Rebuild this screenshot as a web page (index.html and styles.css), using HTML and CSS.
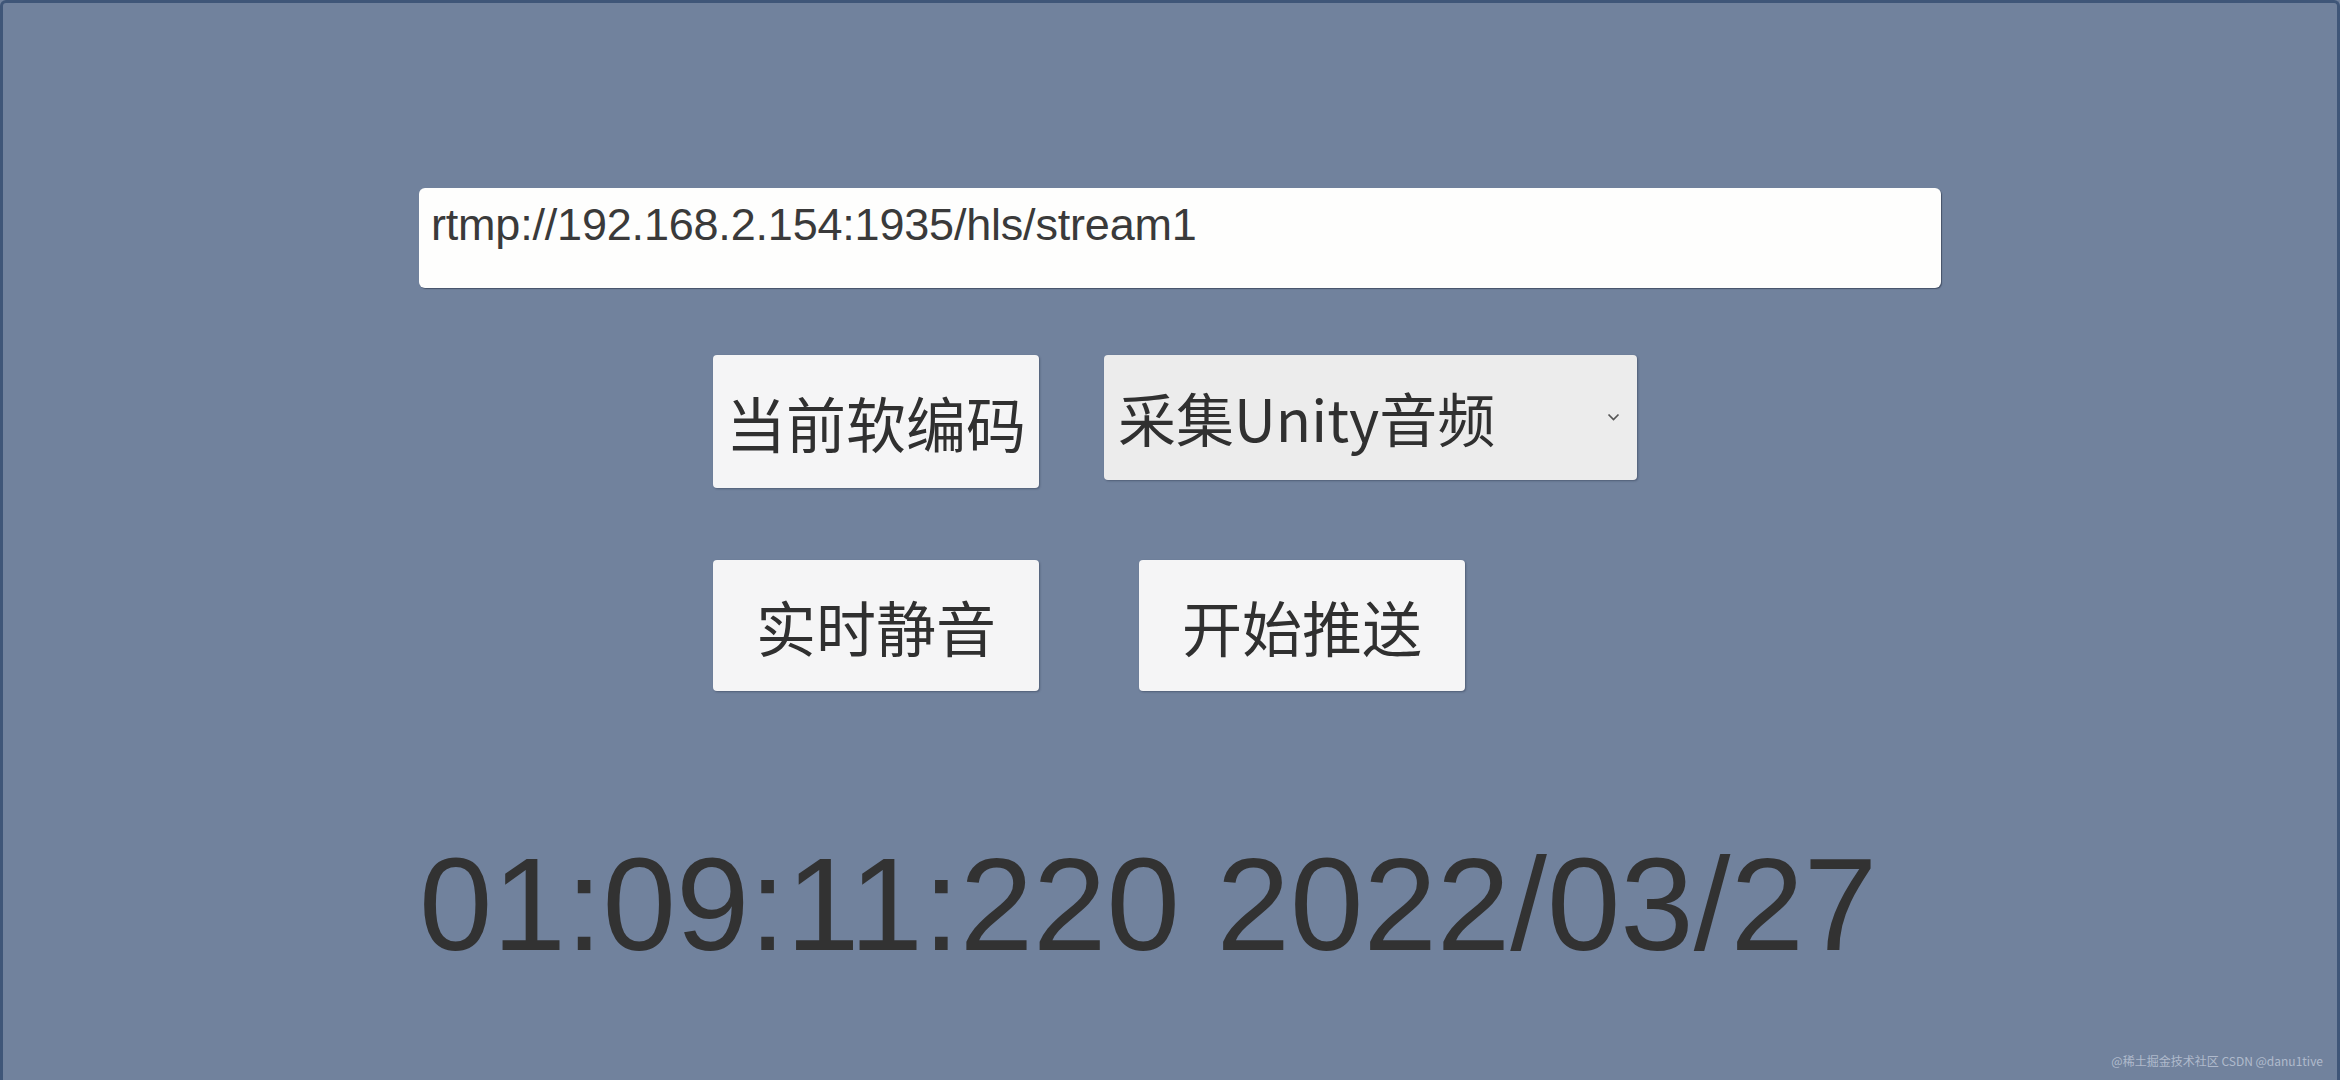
FILE: index.html
```html
<!DOCTYPE html>
<html lang="zh-CN">
<head>
<meta charset="utf-8">
<title>推流</title>
<link rel="stylesheet" href="styles.css">
</head>
<body>
<div class="screen">
  <div class="panel">
    <div class="url-field">rtmp://192.168.2.154:1935/hls/stream1</div>
    <div class="row row-one">
      <div class="btn btn-tall">当前软编码</div>
      <div class="dropdown">
        <span class="dropdown-label">采集Unity音频</span>
        <svg class="chevron" width="13" height="9" viewBox="0 0 13 9"><path d="M1.5 1.5 L6.5 6.5 L11.5 1.5" fill="none" stroke="#555" stroke-width="1.7"/></svg>
      </div>
    </div>
    <div class="row row-two">
      <div class="btn">实时静音</div>
      <div class="btn">开始推送</div>
    </div>
    <div class="clock">01:09:11:220 2022/03/27</div>
  </div>
  <div class="watermark">@稀土掘金技术社区 CSDN @danu1tive</div>
</div>
</body>
</html>
```
FILE: styles.css
```css
html, body {
  margin: 0;
  padding: 0;
  background: #71829d;
}
.screen {
  position: relative;
  width: 2340px;
  height: 1080px;
  box-sizing: border-box;
  border: 3px solid #3f5678;
  border-bottom: none;
  border-radius: 6px 6px 0 0;
  background: #71829d;
  overflow: hidden;
}
.panel {
  display: flex;
  flex-direction: column;
  align-items: flex-start;
  padding-top: 185px;
  padding-left: 416px;
}
.url-field {
  width: 1522px;
  height: 100px;
  box-sizing: border-box;
  background: #fefefd;
  border-radius: 6px;
  box-shadow: 1px 1px 1px rgba(40, 50, 70, 0.6);
  padding: 14px 12px 0;
  font-family: "Liberation Sans", Arial, sans-serif;
  font-size: 45px;
  line-height: 45px;
  color: #3a3a3a;
  letter-spacing: -0.2px;
}
.row {
  display: flex;
  align-items: flex-start;
  margin-left: 294px;
}
.row-one {
  margin-top: 67px;
  gap: 65px;
}
.row-two {
  margin-top: 72px;
  gap: 100px;
}
.btn {
  width: 326px;
  height: 131px;
  display: flex;
  align-items: center;
  justify-content: center;
  background: #f5f5f6;
  border-radius: 4px;
  box-shadow: 1px 1px 2px rgba(40, 50, 70, 0.45);
  font-family: "Noto Sans CJK SC", "Noto Sans", sans-serif;
  font-size: 60px;
  color: #303030;
}
.btn-tall {
  height: 133px;
}
.dropdown {
  width: 533px;
  height: 125px;
  box-sizing: border-box;
  display: flex;
  align-items: center;
  justify-content: space-between;
  padding: 0 17px 0 14px;
  background: #ececec;
  border-radius: 4px;
  box-shadow: 1px 1px 2px rgba(40, 50, 70, 0.45);
  font-family: "Noto Sans CJK SC", "Noto Sans", sans-serif;
  font-size: 58px;
  color: #303030;
}
.dropdown-label {
  margin-top: -2px;
}
.chevron {
  display: block;
}
.clock {
  margin-top: 148px;
  font-family: "Liberation Sans", Arial, sans-serif;
  font-size: 132px;
  line-height: 132px;
  color: #323232;
  white-space: nowrap;
}
.watermark {
  position: absolute;
  right: 14px;
  bottom: 12px;
  font-family: "Noto Sans CJK SC", "Noto Sans", sans-serif;
  font-size: 12px;
  line-height: 14px;
  color: rgba(230, 235, 245, 0.55);
  white-space: nowrap;
}
```
